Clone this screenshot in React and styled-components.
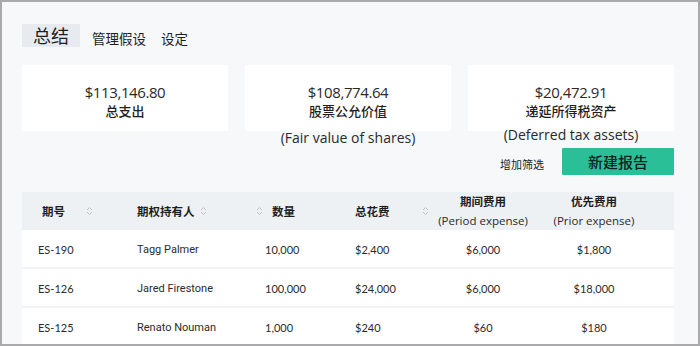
import React from 'react';
import styled, { createGlobalStyle } from 'styled-components';

const GlobalStyle = createGlobalStyle`
  html, body { margin: 0; padding: 0; background: #ffffff; }
  #root { width: 700px; height: 346px; }
`;

const CJK = `"Noto Sans CJK SC", sans-serif`;
const LATIN = `"Lato", "Noto Sans CJK SC", sans-serif`;
const WIDE = `"Open Sans", "Noto Sans CJK SC", sans-serif`;

const Frame = styled.div`
  box-sizing: border-box;
  width: 700px;
  height: 346px;
  border: 2px solid #aaaaad;
  background: #f6f8fa;
  overflow: hidden;
  padding: 22px 0 0 20px;
  font-family: ${LATIN};
  color: #222;
`;

const Tabs = styled.nav`
  display: flex;
  align-items: flex-end;
  height: 23px;
`;

const Tab = styled.div`
  font-family: ${CJK};
  font-size: ${p => (p.$active ? '18px' : '13.5px')};
  line-height: ${p => (p.$active ? '23px' : '18px')};
  padding: ${p => (p.$active ? '0 11px' : '0')};
  margin-right: ${p => (p.$active ? '12px' : '15px')};
  background: ${p => (p.$active ? '#e7ebf0' : 'transparent')};
  color: #1e1e1e;
`;

const Cards = styled.div`
  display: flex;
  gap: 17px;
  margin-top: 18px;
`;

const CardCol = styled.div`
  width: 206px;
  display: flex;
  flex-direction: column;
  align-items: center;
`;

const Card = styled.div`
  box-sizing: border-box;
  width: 206px;
  height: 66px;
  background: #ffffff;
  display: flex;
  flex-direction: column;
  align-items: center;
  padding-top: 18px;
`;

const Amount = styled.div`
  font-family: ${WIDE};
  font-size: 15px;
  line-height: 18px;
  color: #2a2a2a;
  letter-spacing: -0.4px;
`;

const Label = styled.div`
  font-family: ${CJK};
  font-size: 13px;
  line-height: 20px;
  font-weight: 500;
  color: #1e1e1e;
`;

const Caption = styled.div`
  font-family: ${WIDE};
  font-size: 14px;
  line-height: 16px;
  color: #2a2a2a;
  margin-top: ${p => p.$mt || 0}px;
  white-space: nowrap;
`;

const Actions = styled.div`
  display: flex;
  justify-content: flex-end;
  align-items: center;
  width: 652px;
  margin-top: 2px;
  gap: 18px;
`;

const FilterLink = styled.span`
  font-family: ${CJK};
  font-size: 11px;
  color: #222;
  margin-top: 4px;
`;

const NewButton = styled.button`
  width: 112px;
  height: 27px;
  border: none;
  border-radius: 1px;
  background: #2bbf98;
  color: #0f211d;
  font-family: ${CJK};
  font-weight: 500;
  font-size: 15px;
  padding: 0;
`;

const Table = styled.div`
  width: 652px;
  margin-top: 17px;
  display: flex;
  flex-direction: column;
`;

const Row = styled.div`
  display: grid;
  grid-template-columns: 108px 120px 95px 85px 106px 116px 1fr;
  box-sizing: border-box;
  height: ${p => (p.$head ? '38px' : '39px')};
  padding-top: ${p => (p.$head ? '0' : '2px')};
  align-items: center;
  background: ${p => (p.$head ? '#eef1f4' : '#ffffff')};
  border-bottom: ${p => (p.$head ? 'none' : '2px solid #f1f3f6')};
  font-size: 11px;
`;

const HeadCell = styled.div`
  display: flex;
  align-items: center;
  font-family: ${CJK};
  font-size: 11.5px;
  font-weight: 700;
  color: #1e1e1e;
  padding-left: ${p => p.$pl || 0}px;
  gap: ${p => p.$gap || 0}px;
  ${p => p.$center && 'flex-direction: column; justify-content: center; padding-left: 0; line-height: 19px;'}
`;

const Sub = styled.span`
  font-family: ${WIDE};
  font-weight: 400;
  font-size: 11.5px;
  color: #2a2a2a;
`;

const Cell = styled.div`
  font-family: ${p => (p.$name ? `"Roboto", sans-serif` : LATIN)};
  font-size: 11px;
  color: #2b2b2b;
  padding-left: ${p => p.$pl || 0}px;
  text-align: ${p => (p.$center ? 'center' : 'left')};
`;

const SortIcon = () => (
  <svg width="7" height="10" viewBox="0 0 7 10" fill="none" stroke="#bfc3c8" strokeWidth="1">
    <path d="M1 4 L3.5 1.5 L6 4" />
    <path d="M1 6 L3.5 8.5 L6 6" />
  </svg>
);

const cards = [
  { amount: '$113,146.80', label: '总支出' },
  { amount: '$108,774.64', label: '股票公允价值', caption: '(Fair value of shares)', mt: -1 },
  { amount: '$20,472.91', label: '递延所得税资产', caption: '(Deferred tax assets)', mt: -4 },
];

const rows = [
  ['ES-190', 'Tagg Palmer', '10,000', '$2,400', '$6,000', '$1,800'],
  ['ES-126', 'Jared Firestone', '100,000', '$24,000', '$6,000', '$18,000'],
  ['ES-125', 'Renato Nouman', '1,000', '$240', '$60', '$180'],
];

export default function App() {
  return (
    <>
      <GlobalStyle />
      <Frame>
        <Tabs>
          <Tab $active>总结</Tab>
          <Tab>管理假设</Tab>
          <Tab>设定</Tab>
        </Tabs>
        <Cards>
          {cards.map(c => (
            <CardCol key={c.amount}>
              <Card>
                <Amount>{c.amount}</Amount>
                <Label>{c.label}</Label>
              </Card>
              {c.caption && <Caption $mt={c.mt}>{c.caption}</Caption>}
            </CardCol>
          ))}
        </Cards>
        <Actions>
          <FilterLink>增加筛选</FilterLink>
          <NewButton>新建报告</NewButton>
        </Actions>
        <Table>
          <Row $head>
            <HeadCell $pl={20} $gap={21}>期号<SortIcon /></HeadCell>
            <HeadCell $pl={7} $gap={5}>期权持有人<SortIcon /></HeadCell>
            <HeadCell $pl={6} $gap={9}><SortIcon />数量</HeadCell>
            <HeadCell $pl={10} $gap={32}>总花费<SortIcon /></HeadCell>
            <HeadCell $center>期间费用<Sub>(Period expense)</Sub></HeadCell>
            <HeadCell $center>优先费用<Sub>(Prior expense)</Sub></HeadCell>
            <div />
          </Row>
          {rows.map(r => (
            <Row key={r[0]}>
              <Cell $pl={16}>{r[0]}</Cell>
              <Cell $pl={7} $name>{r[1]}</Cell>
              <Cell $pl={15}>{r[2]}</Cell>
              <Cell $pl={10}>{r[3]}</Cell>
              <Cell $center>{r[4]}</Cell>
              <Cell $center>{r[5]}</Cell>
              <div />
            </Row>
          ))}
        </Table>
      </Frame>
    </>
  );
}
